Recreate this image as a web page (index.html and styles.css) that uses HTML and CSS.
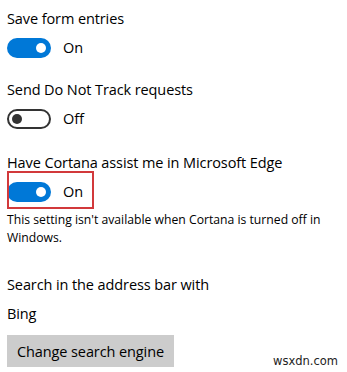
FILE: index.html
```html
<!DOCTYPE html>
<html>
<head>
<meta charset="utf-8">
<link rel="stylesheet" href="styles.css">
</head>
<body>
<div class="page">
  <div class="setting s1">
    <div class="label">Save form entries</div>
    <div class="toggle-row">
      <span class="toggle on"><span class="knob"></span></span>
      <span class="state">On</span>
    </div>
  </div>
  <div class="setting s2">
    <div class="label">Send Do Not Track requests</div>
    <div class="toggle-row">
      <span class="toggle off"><span class="knob"></span></span>
      <span class="state">Off</span>
    </div>
  </div>
  <div class="setting s3">
    <div class="label">Have Cortana assist me in Microsoft Edge</div>
    <div class="toggle-row highlighted">
      <span class="toggle on"><span class="knob"></span></span>
      <span class="state">On</span>
    </div>
    <div class="help">This setting isn't available when Cortana is turned off in Windows.</div>
  </div>
  <div class="setting s4">
    <div class="label">Search in the address bar with</div>
    <div class="value">Bing</div>
    <button class="btn">Change search engine</button>
  </div>
</div>
<div class="watermark">wsxdn.com</div>
</body>
</html>
```
FILE: styles.css
```css
html, body {
  margin: 0;
  padding: 0;
  background: #ffffff;
}
body {
  width: 347px;
  height: 372px;
  position: relative;
  overflow: hidden;
  font-family: "Open Sans", "Noto Sans", sans-serif;
  color: #000;
}
.page {
  padding-left: 7px;
  display: flex;
  flex-direction: column;
}
.setting {
  display: flex;
  flex-direction: column;
  align-items: flex-start;
}
.label, .value {
  font-size: 14.5px;
  line-height: 20px;
  letter-spacing: -0.1px;
}
.s1 { padding-top: 9px; }
.s2 { padding-top: 22px; }
.s3 { padding-top: 24px; }
.s4 { padding-top: 28px; }
.toggle-row {
  margin-top: 9px;
  display: flex;
  align-items: center;
  height: 20px;
  position: relative;
}
.toggle {
  box-sizing: border-box;
  width: 44px;
  height: 20px;
  border-radius: 10px;
  position: relative;
  display: block;
}
.toggle.on {
  background: #0078d7;
}
.toggle.off {
  border: 2px solid #333333;
  background: #fff;
}
.knob {
  position: absolute;
  width: 10px;
  height: 10px;
  border-radius: 50%;
  top: 5px;
}
.toggle.on .knob {
  background: #fff;
  right: 5px;
}
.toggle.off .knob {
  background: #333333;
  left: 3px;
  top: 3px;
}
.state {
  margin-left: 12px;
  font-size: 14.5px;
  line-height: 20px;
}
.highlighted::after {
  content: "";
  position: absolute;
  left: 0;
  top: -11px;
  width: 87px;
  height: 38px;
  box-sizing: border-box;
  border: 2px solid #d2393b;
}
.help {
  margin-top: 9px;
  font-size: 12.2px;
  line-height: 18px;
  width: 330px;
}
.value {
  margin-top: 9px;
}
.btn {
  margin-top: 11px;
  width: 167px;
  height: 32px;
  border: none;
  background: #cccccc;
  font-family: "Open Sans", "Noto Sans", sans-serif;
  font-size: 14.5px;
  color: #000;
  padding: 0 0 0 10px;
  text-align: left;
  letter-spacing: -0.1px;
}
.watermark {
  position: absolute;
  left: 273px;
  top: 354px;
  font-family: "DejaVu Sans", sans-serif;
  font-size: 11.5px;
  line-height: 14px;
  color: #222;
}
```
